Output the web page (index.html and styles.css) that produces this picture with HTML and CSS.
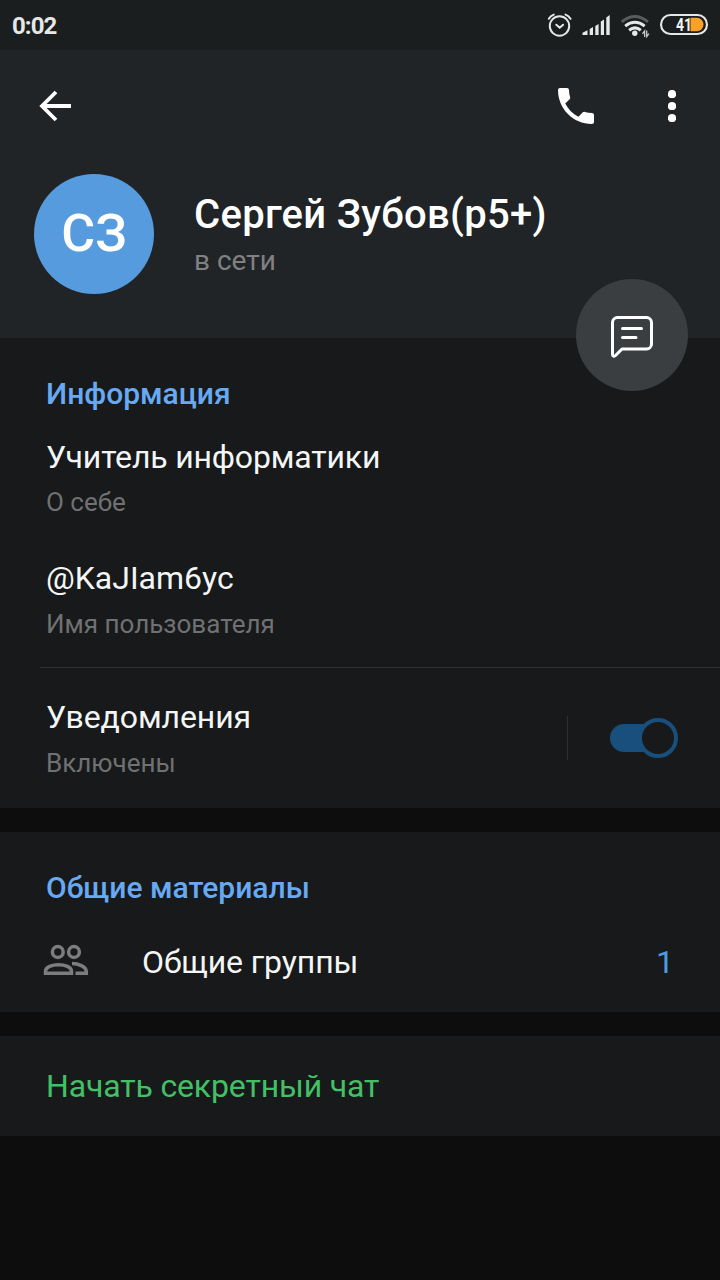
FILE: index.html
```html
<!DOCTYPE html>
<html lang="ru">
<head>
<meta charset="utf-8">
<title>Профиль</title>
<link rel="stylesheet" href="styles.css">
</head>
<body>
<div class="screen">
  <div class="statusbar">
    <span class="time">0:02</span>
    <svg class="status-icons" width="166" height="32" viewBox="544 10 166 32" fill="none">
      <g stroke="#e6e8e8" stroke-width="2" stroke-linecap="round">
        <circle cx="559.5" cy="26" r="9.7"/>
        <path d="M556.3 24.7l3.4 3 3.4-3M548.8 18.8q1.8-3 5-4.2M565.5 14.6q3.2 1.2 5 4.2"/>
      </g>
      <path fill="#e6e8e8" d="M582.5 35v-2.2l5-2.6V35zM589.7 35v-6l3.3-2v8zM595.3 35v-9l3.3-2v11zM600.8 35V21.5l3.2-2V35zM606.3 35V17.5l3.4-2.5v20z"/>
      <path stroke="#595d5e" stroke-width="3" d="M621.7 21.8q13.1-10.5 26.3 0"/>
      <path stroke="#e6e8e8" stroke-width="3" d="M625.2 26.1q9.7-7.6 19.5 0M629.1 30.2q5.8-4.6 11.7 0"/>
      <circle cx="634.8" cy="33.3" r="2.7" fill="#e6e8e8"/>
      <path stroke="#c8cbcb" stroke-width="1.3" d="M644.6 37v-6l-2.2 2.8M646.7 30.5v6l2.2-2.8"/>
      <path fill="#fba226" d="M690.5 17.8h6.3a6.7 6.7 0 010 13.4h-6.3z"/>
      <rect x="661" y="15" width="46" height="19" rx="9.5" stroke="#e6e8e8" stroke-width="2.1"/>
      <text class="battery" x="676" y="31" textLength="16" lengthAdjust="spacingAndGlyphs">41</text>
    </svg>
  </div>
  <header class="profile">
    <div class="toolbar">
      <svg class="back" width="34" height="34" viewBox="0 0 34 34" fill="none" stroke="#fff" stroke-width="3.8"><path d="M18 3L4 17l14 14M4 17H33"/></svg>
      <svg class="call" width="48" height="48" viewBox="0 0 24 24" fill="#fff"><path d="M6.62 10.79c1.44 2.83 3.76 5.14 6.59 6.59l2.2-2.2c.27-.27.67-.36 1.02-.24 1.12.37 2.33.57 3.57.57.55 0 1 .45 1 1V20c0 .55-.45 1-1 1-9.39 0-17-7.61-17-17 0-.55.45-1 1-1h3.5c.55 0 1 .45 1 1 0 1.25.2 2.45.57 3.57.11.35.03.74-.25 1.02l-2.2 2.2z"/></svg>
      <svg class="more" width="8" height="32" viewBox="0 0 8 32" fill="#fff"><circle cx="4" cy="4" r="4.1"/><circle cx="4" cy="16" r="4.1"/><circle cx="4" cy="28" r="4.1"/></svg>
    </div>
    <div class="person">
      <div class="avatar">СЗ</div>
      <div class="identity">
        <h1 class="name">Сергей Зубов(p5+)</h1>
        <div class="presence">в сети</div>
      </div>
    </div>
    <div class="message-button">
      <svg width="48" height="48" viewBox="608 311 48 48" fill="none" stroke="#fff" stroke-width="3" stroke-linejoin="round" stroke-linecap="round"><path d="M617.5 317.5h29a5 5 0 015 5v21.5a5 5 0 01-5 5H622l-6.5 6.5c-1.3 1.2-3 .6-3-1.2V322.5a5 5 0 015-5zM622.5 328.5h19M622.5 337.5h13.5"/></svg>
    </div>
  </header>
  <section class="info">
    <h2 class="heading">Информация</h2>
    <div class="row about"><div class="value">Учитель информатики</div><div class="label">О себе</div></div>
    <div class="row username"><div class="value">@KaJIam6yc</div><div class="label">Имя пользователя</div></div>
    <div class="notifications">
      <div class="row"><div class="value">Уведомления</div><div class="label">Включены</div></div>
      <div class="switch-area">
        <svg width="70" height="42" viewBox="0 0 70 42"><rect x="1" y="7" width="60" height="28" rx="14" fill="#184f7c"/><circle cx="49" cy="21" r="18" fill="#17191a" stroke="#184f7c" stroke-width="4"/></svg>
      </div>
    </div>
  </section>
  <section class="shared">
    <h2 class="heading">Общие материалы</h2>
    <div class="groups">
      <svg width="46" height="36" viewBox="43 944 46 36" fill="none" stroke="#7b7d7e" stroke-width="3.5"><circle cx="57.8" cy="952" r="5.4"/><circle cx="74" cy="952" r="5.4"/><path d="M45.5 973.2h26v-1.9c0-8.6-26-8.6-26 0zM72 963.6c6 0 14.3 2.6 14.3 7.9v1.7H75.5"/></svg>
      <span class="value">Общие группы</span>
      <span class="count">1</span>
    </div>
  </section>
  <section class="secret">Начать секретный чат</section>
</div>
</body>
</html>
```
FILE: styles.css
```css
* { box-sizing: border-box; }
body { margin: 0; background: #0d0d0d; font-family: Roboto, "Noto Sans", sans-serif; }
h1, h2 { margin: 0; font-weight: 500; }
svg { display: block; flex: none; }
.screen { width: 720px; height: 1280px; overflow: hidden; background: #0d0d0d; white-space: nowrap; }
.statusbar { display: flex; justify-content: space-between; height: 50px; padding: 10px 10px 0 12px; background: #1b1e1e; }
.time { color: #e6e8e8; font-size: 24px; font-weight: 700; line-height: 32px; letter-spacing: -0.9px; }
.battery { fill: #f4f4f4; font-size: 18.5px; font-weight: 700; }
.profile { position: relative; height: 288px; background: #212426; }
.toolbar { display: flex; align-items: center; height: 112px; padding: 0 44px 0 38px; }
.call { margin-left: auto; }
.more { margin-left: 68px; }
.person { display: flex; gap: 40px; padding: 12px 34px 0; }
.avatar { width: 120px; height: 120px; border-radius: 50%; background: #559bdd; color: #fff; font-size: 52px; font-weight: 500; line-height: 120px; text-align: center; }
.identity { padding-top: 17px; }
.name { color: #fff; font-size: 40px; line-height: 48px; letter-spacing: 0.3px; }
.presence { margin-top: 5px; color: #7f8182; font-size: 28px; line-height: 34px; }
.message-button { position: absolute; right: 32px; bottom: -53px; display: flex; align-items: center; justify-content: center; width: 112px; height: 112px; border-radius: 50%; background: #3a3e41; }
.info { height: 470px; padding-top: 38px; background: #17191a; }
.heading { padding-left: 46px; color: #68a9f3; font-size: 30px; line-height: 36px; }
.row { padding-left: 46px; }
.about { margin-top: 26px; }
.username { margin-top: 42px; }
.value { color: #f4f5f5; font-size: 32px; line-height: 38px; }
.about .value { letter-spacing: -0.17px; }
.label { margin-top: 11px; color: #707172; font-size: 26px; line-height: 30px; }
.username .label { margin-top: 12px; }
.notifications { display: flex; justify-content: space-between; height: 141px; margin: 28px 0 0 40px; padding-top: 29px; border-top: 1px solid #2d2f30; }
.notifications .row { padding: 1px 0 0 6px; }
.notifications .value { letter-spacing: -0.1px; }
.notifications .label { margin-top: 12px; }
.switch-area { display: flex; align-items: center; width: 153px; height: 44px; margin-top: 19px; padding-left: 41px; border-left: 1px solid #2d2f30; }
.shared { height: 180px; margin-top: 24px; padding-top: 38px; background: #17191a; }
.groups { display: flex; align-items: center; margin-top: 37px; padding: 0 46px 0 43px; }
.groups .value { margin-left: 53px; letter-spacing: -0.1px; }
.count { margin-left: auto; color: #4c9ce2; font-size: 32px; line-height: 38px; }
.secret { height: 100px; margin-top: 24px; padding: 31px 46px; background: #17191a; color: #43c066; font-size: 32px; line-height: 38px; letter-spacing: -0.15px; }
```
